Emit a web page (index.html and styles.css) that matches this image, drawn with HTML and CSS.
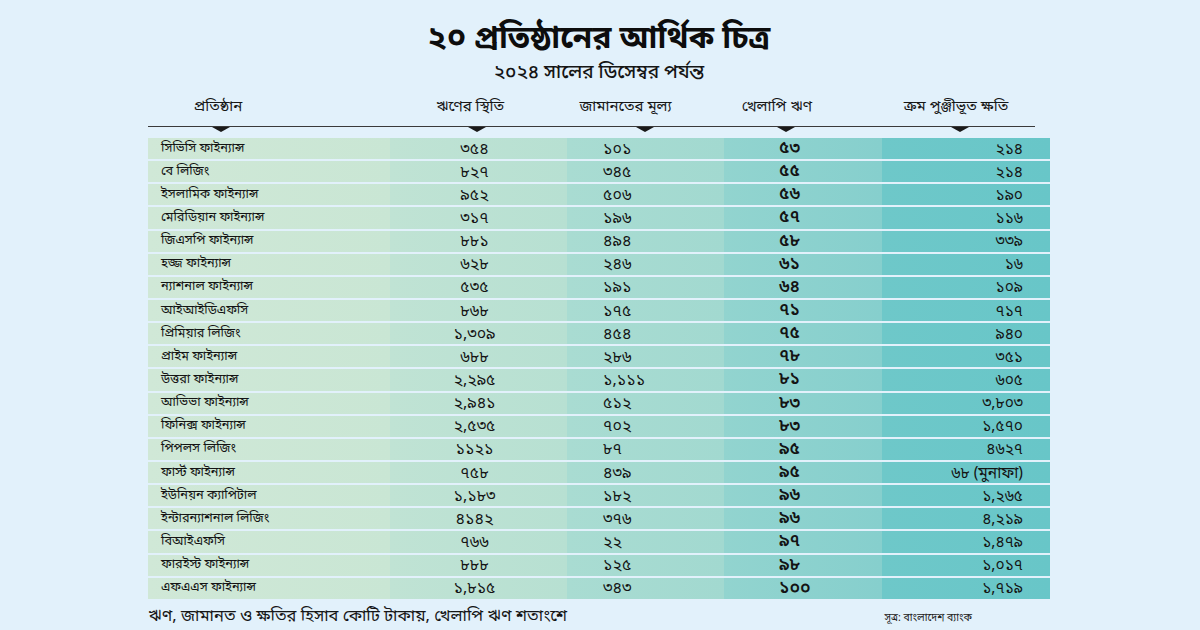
FILE: index.html
```html
<!DOCTYPE html>
<html lang="bn">
<head>
<meta charset="utf-8">
<title>২০ প্রতিষ্ঠানের আর্থিক চিত্র</title>
<link rel="stylesheet" href="styles.css">
</head>
<body>
<div class="page">
  <h1 class="title">২০ প্রতিষ্ঠানের আর্থিক চিত্র</h1>
  <p class="subtitle">২০২৪ সালের ডিসেম্বর পর্যন্ত</p>

  <div class="head">
    <div class="hcell h1"><span class="lbl">প্রতিষ্ঠান</span><span class="tri"></span></div>
    <div class="hcell h2"><span class="lbl">ঋণের স্থিতি</span><span class="tri"></span></div>
    <div class="hcell h3"><span class="lbl">জামানতের মূল্য</span><span class="tri"></span></div>
    <div class="hcell h4"><span class="lbl">খেলাপি ঋণ</span><span class="tri"></span></div>
    <div class="hcell h5"><span class="lbl">ক্রম পুঞ্জীভূত ক্ষতি</span><span class="tri"></span></div>
  </div>

  <div class="table">
    <div class="row"><span class="c c1">সিভিসি ফাইন্যান্স</span><span class="c c2">৩৫৪</span><span class="c c3">১০১</span><span class="c c4">৫৩</span><span class="c c5">২১৪</span></div>
    <div class="row"><span class="c c1">বে লিজিং</span><span class="c c2">৮২৭</span><span class="c c3">৩৪৫</span><span class="c c4">৫৫</span><span class="c c5">২১৪</span></div>
    <div class="row"><span class="c c1">ইসলামিক ফাইন্যান্স</span><span class="c c2">৯৫২</span><span class="c c3">৫০৬</span><span class="c c4">৫৬</span><span class="c c5">১৯০</span></div>
    <div class="row"><span class="c c1">মেরিডিয়ান ফাইন্যান্স</span><span class="c c2">৩১৭</span><span class="c c3">১৯৬</span><span class="c c4">৫৭</span><span class="c c5">১১৬</span></div>
    <div class="row"><span class="c c1">জিএসপি ফাইন্যান্স</span><span class="c c2">৮৮১</span><span class="c c3">৪৯৪</span><span class="c c4">৫৮</span><span class="c c5">৩৩৯</span></div>
    <div class="row"><span class="c c1">হজ্জ ফাইন্যান্স</span><span class="c c2">৬২৮</span><span class="c c3">২৪৬</span><span class="c c4">৬১</span><span class="c c5">১৬</span></div>
    <div class="row"><span class="c c1">ন্যাশনাল ফাইন্যান্স</span><span class="c c2">৫৩৫</span><span class="c c3">১৯১</span><span class="c c4">৬৪</span><span class="c c5">১০৯</span></div>
    <div class="row"><span class="c c1">আইআইডিএফসি</span><span class="c c2">৮৬৮</span><span class="c c3">১৭৫</span><span class="c c4">৭১</span><span class="c c5">৭১৭</span></div>
    <div class="row"><span class="c c1">প্রিমিয়ার লিজিং</span><span class="c c2">১,৩০৯</span><span class="c c3">৪৫৪</span><span class="c c4">৭৫</span><span class="c c5">৯৪০</span></div>
    <div class="row"><span class="c c1">প্রাইম ফাইন্যান্স</span><span class="c c2">৬৮৮</span><span class="c c3">২৮৬</span><span class="c c4">৭৮</span><span class="c c5">৩৫১</span></div>
    <div class="row"><span class="c c1">উত্তরা ফাইন্যান্স</span><span class="c c2">২,২৯৫</span><span class="c c3">১,১১১</span><span class="c c4">৮১</span><span class="c c5">৬০৫</span></div>
    <div class="row"><span class="c c1">আভিভা ফাইন্যান্স</span><span class="c c2">২,৯৪১</span><span class="c c3">৫১২</span><span class="c c4">৮৩</span><span class="c c5">৩,৮০৩</span></div>
    <div class="row"><span class="c c1">ফিনিক্স ফাইন্যান্স</span><span class="c c2">২,৫৩৫</span><span class="c c3">৭০২</span><span class="c c4">৮৩</span><span class="c c5">১,৫৭০</span></div>
    <div class="row"><span class="c c1">পিপলস লিজিং</span><span class="c c2">১১২১</span><span class="c c3">৮৭</span><span class="c c4">৯৫</span><span class="c c5">৪৬২৭</span></div>
    <div class="row"><span class="c c1">ফার্স্ট ফাইন্যান্স</span><span class="c c2">৭৫৮</span><span class="c c3">৪৩৯</span><span class="c c4">৯৫</span><span class="c c5">৬৮ (মুনাফা)</span></div>
    <div class="row"><span class="c c1">ইউনিয়ন ক্যাপিটাল</span><span class="c c2">১,১৮৩</span><span class="c c3">১৮২</span><span class="c c4">৯৬</span><span class="c c5">১,২৬৫</span></div>
    <div class="row"><span class="c c1">ইন্টারন্যাশনাল লিজিং</span><span class="c c2">৪১৪২</span><span class="c c3">৩৭৬</span><span class="c c4">৯৬</span><span class="c c5">৪,২১৯</span></div>
    <div class="row"><span class="c c1">বিআইএফসি</span><span class="c c2">৭৬৬</span><span class="c c3">২২</span><span class="c c4">৯৭</span><span class="c c5">১,৪৭৯</span></div>
    <div class="row"><span class="c c1">ফারইস্ট ফাইন্যান্স</span><span class="c c2">৮৮৮</span><span class="c c3">১২৫</span><span class="c c4">৯৮</span><span class="c c5">১,০১৭</span></div>
    <div class="row"><span class="c c1">এফএএস ফাইন্যান্স</span><span class="c c2">১,৮১৫</span><span class="c c3">৩৪৩</span><span class="c c4">১০০</span><span class="c c5">১,৭১৯</span></div>
  </div>

  <div class="foot">
    <span class="note">ঋণ, জামানত ও ক্ষতির হিসাব কোটি টাকায়, খেলাপি ঋণ শতাংশে</span>
    <span class="src">সূত্র: বাংলাদেশ ব্যাংক</span>
  </div>
</div>
</body>
</html>
```

FILE: styles.css
```css
html, body {
  margin: 0;
  padding: 0;
}
body {
  width: 1200px;
  height: 630px;
  overflow: hidden;
  background: #e2f1fb;
  font-family: "Noto Sans Bengali", "Noto Serif Bengali", "Lohit Bengali", "Noto Sans", sans-serif;
  color: #111;
}
.page {
  width: 902px;
  margin: 0 auto;
  padding-top: 20px;
  box-sizing: border-box;
  transform: translateX(-1px);
}
.title {
  margin: 0;
  text-align: center;
  font-size: 31.5px;
  line-height: 40px;
  font-weight: 700;
  color: #0d0d0d;
}
.subtitle {
  margin: 2px 0 0;
  text-align: center;
  font-size: 19px;
  line-height: 24px;
  font-weight: 500;
  color: #151515;
}
.head {
  display: grid;
  grid-template-columns: 242px 177px 157px 158px 168px;
  margin-top: 10px;
  border-bottom: 1px solid #3a3a3a;
  margin-right: 15px;
  position: relative;
}
.hcell {
  display: flex;
  flex-direction: column;
  align-items: center;
  height: 30px;
  position: relative;
}
.lbl {
  font-size: 15px;
  line-height: 22px;
  color: #161616;
  white-space: nowrap;
}
.tri {
  position: absolute;
  bottom: -6px;
  width: 0;
  height: 0;
  border-left: 9px solid transparent;
  border-right: 9px solid transparent;
  border-top: 5px solid #1a1a1a;
}
.h1 { padding-right: 96px; }
.h1 .tri { left: 64px; }
.h1 .lbl { margin-right: 6px; }
.h2 .lbl { margin-right: 17px; }
.h2 .tri { left: 78px; }
.h3 .lbl { margin-right: 40px; }
.h3 .tri { left: 69px; }
.h4 .lbl { margin-right: 52px; }
.h4 .tri { left: 53px; }
.h5 .lbl { margin-right: 20px; }
.h5 .tri { left: 69px; }

.table {
  display: flex;
  flex-direction: column;
  gap: 2px;
  margin-top: 11px;
}
.row {
  display: grid;
  grid-template-columns: 242px 177px 157px 158px 168px;
  grid-template-rows: 21.15px;
  height: 21.15px;
}
.c {
  display: flex;
  align-items: center;
  font-size: 16px;
  line-height: 16px;
  height: 21.15px;
  white-space: nowrap;
  color: #141414;
  padding-top: 2px;
  box-sizing: border-box;
  min-height: 0;
}
.c1 {
  padding-left: 13px;
  padding-top: 0;
  font-size: 12.8px;
  background: linear-gradient(90deg, #d0e8d7, #c9e6d4);
}
.c2 {
  justify-content: center;
  padding-right: 8px;
  background: linear-gradient(90deg, #c0e3d4, #b7e0d2);
}
.c3 {
  padding-left: 36px;
  background: linear-gradient(90deg, #a9dcd2, #a2d9d0);
}
.c4 {
  padding-left: 55px;
  padding-top: 1px;
  font-size: 17.5px;
  line-height: 18px;
  font-weight: 600;
  background: linear-gradient(90deg, #92d4cf, #86cfcd);
}
.c5 {
  justify-content: flex-end;
  padding-right: 27px;
  font-size: 15.5px;
  background: linear-gradient(90deg, #6ec8c9, #68c6c8);
}
.foot {
  display: flex;
  align-items: baseline;
  margin-top: 8px;
}
.note {
  font-size: 16.5px;
  line-height: 20px;
  color: #161616;
}
.src {
  font-size: 10.5px;
  margin-left: auto;
  margin-right: 78px;
  color: #222;
}
```
